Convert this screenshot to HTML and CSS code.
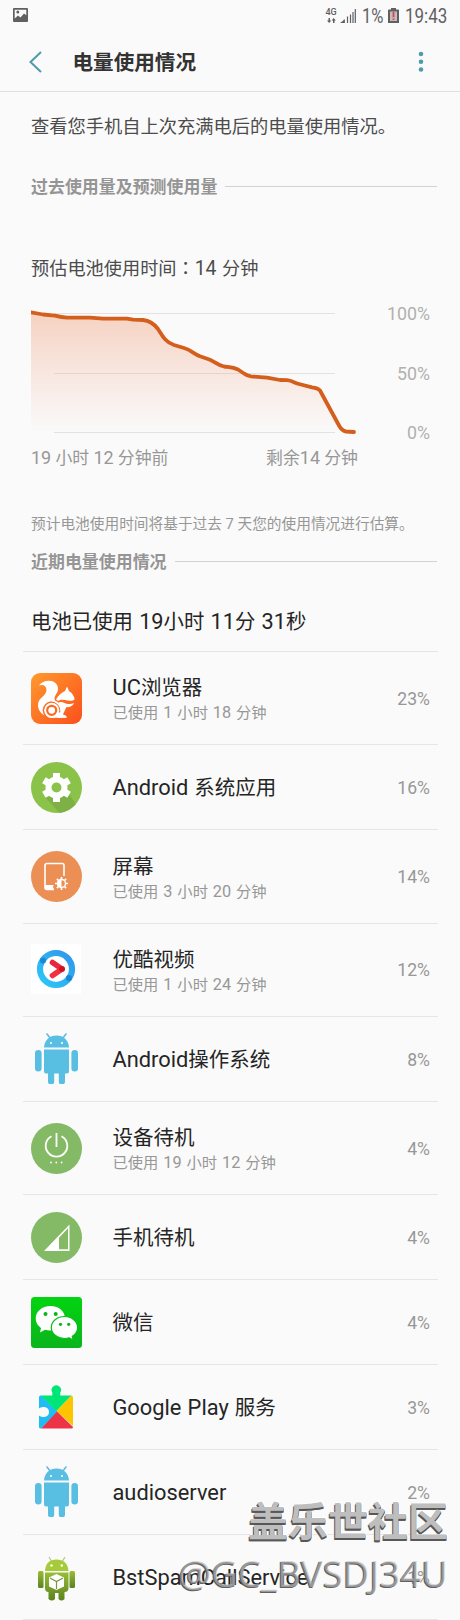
FILE: index.html
```html
<!DOCTYPE html>
<html lang="zh-CN">

<head>
    <meta charset="UTF-8">
    <meta name="viewport" content="width=device-width, initial-scale=1.0">
    <title>电量使用情况</title>
    <link rel="stylesheet" href="styles.css">
</head>

<body>
    <svg class="sprites">
        <symbol id="android" viewBox="0 0 51 51">
            <path d="M13 14.5C13.5 7 18.500 2.500 25.500 2.500S37.500 7 38 14.500z" />
            <path d="M16 1l3.500 4.500M35 1l-3.500 4.500" stroke="#58bfe3" stroke-width="1.600" stroke-linecap="round" />
            <path d="M13 16.500h25v22a2 2 0 0 1-2 2h-2v8a2.800 2.800 0 0 1-6.200 0v-8h-4.600v8a2.800 2.800 0 0 1-6.200 0v-8h-2a2 2 0 0 1-2-2z" />
            <rect x="4" y="17" width="6.600" height="21.500" rx="3.300" />
            <rect x="40.400" y="17" width="6.600" height="21.500" rx="3.300" />
            <circle cx="20" cy="10" r="1.100" fill="#fff" />
            <circle cx="31" cy="10" r="1.100" fill="#fff" />
        </symbol>
    </svg>

    <!-- Status bar -->
    <div class="status">
        <svg class="photo" width="15" height="14" viewBox="0 0 15 14">
            <path fill="#5f6062" fill-rule="evenodd" d="M1 0h13a1 1 0 0 1 1 1v12a1 1 0 0 1-1 1H1a1 1 0 0 1-1-1V1a1 1 0 0 1 1-1zM1.700 1.700v8.800l3.300-3 2.500 2 3.500-4 2.300 1.800V1.700z" />
            <circle cx="4.800" cy="4" r="1.500" fill="#5f6062" />
        </svg>
        <div class="status-right">
            <div class="net">
                <span>4G</span>
                <svg width="9" height="5" viewBox="0 0 9 5">
                    <path fill="#5f6062" d="M1.500 0h1.500v2.500h1.300L2.200 5 0 2.500h1.500zM6 5h1.500V2.500h1.300L6.700 0 4.600 2.500H6z" />
                </svg>
            </div>
            <svg class="signal" width="16" height="14" viewBox="0 0 16 14">
                <path stroke="#5f6062" stroke-width="1.200" d="M4.300 14v-3.500M7.500 14V7.500M10.500 14V5.500M13 14V3M15.300 14V0" />
                <path fill="#5f6062" d="M0 14l4-3v3z" />
            </svg>
            <span class="pct">1%</span>
            <svg class="battery" width="11" height="15" viewBox="0 0 11 15">
                <path fill="#5f6062" d="M3 0h5v1.500h2.200a.800.800 0 0 1 .800.800V15H0V2.300a.800.800 0 0 1 .800-.800H3z" />
                <path fill="#c6bcbc" d="M2 3.500h7v9.500H2z" />
                <path fill="#d8434c" d="M4.600 4h1.800v5.200H4.600zM4.600 10.500h1.800V12H4.600z" />
            </svg>
            <span class="clock">19:43</span>
        </div>
    </div>

    <div class="header">
        <svg width="13" height="22" viewBox="0 0 13 22">
            <path d="M12 1L1.500 11 12 21" fill="none" stroke="#4f9bab" stroke-width="2" />
        </svg>
        <h1>电量使用情况</h1>
        <svg width="6" height="22" viewBox="0 0 6 22" fill="#4f9bab">
            <circle cx="3" cy="3" r="2.300" />
            <circle cx="3" cy="10.700" r="2.300" />
            <circle cx="3" cy="18.500" r="2.300" />
        </svg>
    </div>

    <p class="intro">查看您手机自上次充满电后的电量使用情况。</p>
    <div class="section">
        <h2>过去使用量及预测使用量</h2>
    </div>

    <p class="estimate">预估电池使用时间<span class="colon" lang="zh-TW">：</span><b>14</b> 分钟</p>
    <div class="chart">
        <svg width="330" height="142" viewBox="0 0 330 142">
            <defs>
                <linearGradient id="area" x1="0" y1="0" x2="0" y2="1">
                    <stop offset="0" stop-color="#f09a72" stop-opacity=".42" />
                    <stop offset=".5" stop-color="#f0a080" stop-opacity=".22" />
                    <stop offset="1" stop-color="#f0a080" stop-opacity="0" />
                </linearGradient>
            </defs>
            <path stroke="#e2e2e2" d="M23 13.500h281M23 73.500h281M23 132.500h281" />
            <path fill="url(#area)" d="M0 12.300L12 14.500L24 15.700L35.700 17.700L59 17.700L72 18.700L96 18.700L102 19.700L112 20Q121 21 127 29C131 35 134 42 143 45L156 49L169 56L179 59.700L189 65.300L204 68L217 75.700L236 77.700L249 80L258 80.300L267 84L288 89L310.700 129.300L315 132H0z" />
            <path fill="none" stroke="#d45e1b" stroke-width="3.800" stroke-linejoin="round" d="M-3 12.100L0 12.300L12 14.500L24 15.700Q31 17.500 36 17.700L59 17.700L72 18.700L96 18.700L102 19.700L112 20Q121 21 127 29C131 35 134 42 143 45L153 48C160 50 163 54 169 56.300L179 59.700C184 62 187 65.500 193 66.500C199 67.300 202 67 207 69.500L213 73.500Q216 75.800 220 76.300L236 77.700L249 80L256 80.200C261 80.600 264 83 268 84L281 87.300Q287 88 289 90.500L308 125.500Q311 131 315 131.500L323 132" />
            <circle cx="323" cy="132" r="1.900" fill="#d45e1b" />
        </svg>
        <div class="axis">
            <span>100%</span>
            <span>50%</span>
            <span>0%</span>
        </div>
    </div>
    <div class="times">
        <span><b>19</b> 小时 <b>12</b> 分钟前</span>
        <span>剩余<b>14</b> 分钟</span>
    </div>
    <p class="note">预计电池使用时间将基于过去 7 天您的使用情况进行估算。</p>

    <div class="section">
        <h2>近期电量使用情况</h2>
    </div>
    <p class="total">电池已使用 <b>19</b>小时 <b>11</b>分 <b>31</b>秒</p>

    <!-- App list -->
    <ul class="apps">
        <li class="tall">
            <svg class="icon" viewBox="0 0 51 51">
                <defs>
                    <linearGradient id="uc" x1="0" y1="0" x2="1" y2="1">
                        <stop offset="0" stop-color="#ff9a2e" />
                        <stop offset="1" stop-color="#fb4f1c" />
                    </linearGradient>
                </defs>
                <rect width="51" height="51" rx="9" fill="url(#uc)" />
                <path fill="#fff" d="M8 12.500C10 9 14.500 7.500 18.500 7.700 24 8 27.500 12 27 16.500c-.5 4-3.700 6-3.500 9.500.1 1.500 1 2.500 2 3.500L14 42.500C9.500 40.500 7 36.500 7 32c0-7.500 8.500-9 8.500-15C15.500 13 12 10.800 8 12.500z" />
                <path fill="#fff" d="M25 26.500c2.500-4.500 5.500-6.500 9-8.500l2-4.500 2 4.500c3 1.500 5 5 5.700 8.300-1.500 1.500-4 1.800-7 1.200-4-1-7-1.500-9.700.500z" />
                <path fill="#fff" d="M28 29.500c3-1.500 6 1.500 9.500 1.600 2 .1 4-.3 5.500-1-1 2.800-3.800 4.400-7.800 4.200L32 41.500c2 .3 3.500 1.500 4 3.200H20l6-8z" />
                <circle cx="20.700" cy="37.300" r="9" fill="#fb6a21" />
                <path fill="#fff" d="M16 43.500L30 39l4 5.700H20z" />
                <circle cx="20.700" cy="37.300" r="7.600" fill="#fff" />
                <circle cx="20.700" cy="37.300" r="4.500" fill="#fff" stroke="#fb6a21" stroke-width="2.200" />
                <path fill="none" stroke="#fff" stroke-width="1.700" d="M16.500 27.500c8-1.500 14 4 14 12.500" />
            </svg>
            <div class="info">
                <h3><b>UC</b>浏览器</h3>
                <p>已使用 <b>1</b> 小时 <b>18</b> 分钟</p>
            </div>
            <span class="percent">23%</span>
        </li>
        <li>
            <svg class="icon" viewBox="0 0 51 51">
                <circle cx="25.500" cy="25.500" r="25.500" fill="#8bc34a" />
                <path fill="#7db145" d="M14 35l14.500 15.900A25.500 25.500 0 0 0 45 42L38.500 33z" />
                <circle cx="25.500" cy="25.500" r="8" fill="none" stroke="#fff" stroke-width="6" />
                <g stroke="#fff" stroke-width="7">
                    <path d="M25.500 11v5M25.500 35v5M12.900 18.200l4.300 2.500M33.800 30.300l4.300 2.500M12.900 32.800l4.300-2.500M33.800 20.700l4.300-2.500" />
                </g>
            </svg>
            <div class="info">
                <h3><b>Android</b> 系统应用</h3>
            </div>
            <span class="percent">16%</span>
        </li>
        <li class="tall">
            <svg class="icon" viewBox="0 0 51 51">
                <circle cx="25.500" cy="25.500" r="25.500" fill="#ec8f55" />
                <path fill="none" stroke="#fff" stroke-width="1.600" d="M23 38.500h-7a2 2 0 0 1-2-2V14.500a2 2 0 0 1 2-2h15a2 2 0 0 1 2 2V25" />
                <path fill="#fff" d="M14 34h8.500l-.500 2 1 2.500h-7a2 2 0 0 1-2-2z" />
                <circle cx="30.500" cy="32.500" r="4" fill="none" stroke="#fff" stroke-width="1.400" />
                <path fill="#fff" d="M30.500 28.500a4 4 0 0 0 0 8z" />
                <path stroke="#fff" stroke-width="1.700" d="M30.500 26v2M30.500 37v2M24 32.500h2M35 32.500h2M25.900 27.900l1.400 1.400M33.700 35.700l1.400 1.400M25.900 37.100l1.400-1.400M33.700 29.300l1.400-1.400" />
            </svg>
            <div class="info">
                <h3>屏幕</h3>
                <p>已使用 <b>3</b> 小时 <b>20</b> 分钟</p>
            </div>
            <span class="percent">14%</span>
        </li>
        <li class="tall">
            <svg class="icon" viewBox="0 0 51 51">
                <defs>
                    <linearGradient id="yk" x1="0" y1="1" x2="1" y2="0">
                        <stop offset="0" stop-color="#2cc8f6" />
                        <stop offset="1" stop-color="#3096ea" />
                    </linearGradient>
                </defs>
                <rect width="50" height="50" fill="#fff" />
                <circle cx="25" cy="25" r="16" fill="none" stroke="url(#yk)" stroke-width="6.200" />
                <circle cx="12" cy="16.500" r="3" fill="#1b87d2" />
                <circle cx="38" cy="34" r="3" fill="#1b87d2" />
                <g fill="none" stroke-width="5.600" stroke-linecap="round">
                    <path stroke="#e8283c" d="M21.500 18.500l9.500 6.500" />
                    <path stroke="#f0323f" d="M21.500 31.500l9.500-6.500" />
                    <path stroke="#cc1226" d="M30.800 25h.2" />
                </g>
            </svg>
            <div class="info">
                <h3>优酷视频</h3>
                <p>已使用 <b>1</b> 小时 <b>24</b> 分钟</p>
            </div>
            <span class="percent">12%</span>
        </li>
        <li>
            <svg class="icon droid"><use href="#android" /></svg>
            <div class="info">
                <h3><b>Android</b>操作系统</h3>
            </div>
            <span class="percent">8%</span>
        </li>
        <li class="tall">
            <svg class="icon" viewBox="0 0 51 51">
                <circle cx="25.500" cy="25.500" r="25.500" fill="#84ba65" />
                <path fill="none" stroke="#fff" stroke-width="1.800" d="M25.500 10v14M20.500 13.200a10.800 10.800 0 1 0 10 0" />
                <g fill="#fff">
                    <circle cx="20" cy="39.500" r=".9" />
                    <circle cx="25.300" cy="39.500" r=".9" />
                    <circle cx="30.600" cy="39.500" r=".9" />
                </g>
            </svg>
            <div class="info">
                <h3>设备待机</h3>
                <p>已使用 <b>19</b> 小时 <b>12</b> 分钟</p>
            </div>
            <span class="percent">4%</span>
        </li>
        <li>
            <svg class="icon" viewBox="0 0 51 51">
                <circle cx="25.500" cy="25.500" r="25.500" fill="#84ba65" />
                <path fill="#fff" fill-rule="evenodd" d="M13 39L38.500 12.500V39zM28 25.700v11.600h9V16.300z" />
            </svg>
            <div class="info">
                <h3>手机待机</h3>
            </div>
            <span class="percent">4%</span>
        </li>
        <li>
            <svg class="icon" viewBox="0 0 51 51">
                <defs>
                    <linearGradient id="wx" x1="0" y1="0" x2="0" y2="1">
                        <stop offset="0" stop-color="#02d511" />
                        <stop offset="1" stop-color="#0bb41c" />
                    </linearGradient>
                </defs>
                <rect width="51" height="51" rx="3.500" fill="url(#wx)" />
                <path fill="#fff" d="M19.500 9C11 9 4.700 14.500 4.700 21.500c0 4 2 7.200 5.300 9.500l-1 4.500 5-2.800c2 .600 4 .800 6 .700C28 33.500 34 28 34 21.500 34 14.500 28 9 19.500 9z" />
                <path fill="#fff" stroke="#06c016" stroke-width="1.200" d="M33.500 19.500c-7.300 0-13.200 4.800-13.200 11s5.900 11 13.200 11c1.700 0 3.300-.200 4.700-.700l4 2.200-.900-3.700c3.300-2 5.300-5.200 5.300-8.800 0-6.200-5.800-11-13.100-11z" />
                <g fill="#08b818">
                    <circle cx="14.500" cy="17" r="2" />
                    <circle cx="24.700" cy="17" r="2" />
                    <circle cx="29.500" cy="27.300" r="1.600" />
                    <circle cx="37.700" cy="27.300" r="1.600" />
                </g>
            </svg>
            <div class="info">
                <h3>微信</h3>
            </div>
            <span class="percent">4%</span>
        </li>
        <li>
            <svg class="icon" viewBox="0 0 51 51">
                <path fill="#00e676" d="M9.500 13.500h11.800v-3a4.700 4.700 0 1 1 8 0v3H40.500L25 29.500z" />
                <path fill="#ffc400" d="M40.500 13.500q1.500.5 1.500 2V44L25.500 29z" />
                <path fill="#ef3346" d="M25.500 29L42 45q0 1.500-1.500 1.500H10z" />
                <path fill="#20bdf5" d="M10 13.500q-2 0-2 1.500v11.500c3-2.500 10-2.200 10 3.500s-7 6-10 3.500V45q0 1.500 2 1.500L26 29.800z" />
            </svg>
            <div class="info">
                <h3><b>Google Play</b> 服务</h3>
            </div>
            <span class="percent">3%</span>
        </li>
        <li>
            <svg class="icon droid"><use href="#android" /></svg>
            <div class="info">
                <h3><b>audioserver</b></h3>
            </div>
            <span class="percent">2%</span>
        </li>
        <li>
            <svg class="icon" viewBox="0 0 51 51">
                <defs>
                    <linearGradient id="bot" x1="0" y1="0" x2="0" y2="1">
                        <stop offset="0" stop-color="#98bd38" />
                        <stop offset="1" stop-color="#5b8220" />
                    </linearGradient>
                </defs>
                <path stroke="#b2c88a" stroke-width="1.200" d="M18 5l3 5M34 5l-3 5" />
                <path fill="#a5cb3b" d="M14 19C14.500 11 19 7.500 25.500 7.500S37 11 37.500 19z" />
                <circle cx="20.500" cy="13.500" r="1.200" fill="#fff" />
                <circle cx="30.800" cy="13.500" r="1.200" fill="#fff" />
                <g fill="url(#bot)">
                    <rect x="7" y="19" width="5.500" height="17" rx="1.500" />
                    <rect x="38.500" y="19" width="5.500" height="17" rx="1.500" />
                    <path d="M14 20.500h23.500V36q0 4-4 4v7q-3 3-6 0v-6h-3.500v6q-3 3-6.500 0v-7q-3.500 0-3.500-4z" />
                </g>
                <path fill="#fff" d="M25.500 22l7.500 3.500v9L25.500 38 18 34.500v-9z" />
                <path fill="none" stroke="#78963c" stroke-width="1.200" d="M19 26l6.500 3.500L32 26M25.500 29.500V37" />
            </svg>
            <div class="info">
                <h3><b>BstSpamCallService</b></h3>
            </div>
            <span class="percent">1%</span>
        </li>
    </ul>

    <div class="watermark">
        <div class="wm-name">盖乐世社区</div>
        <div class="wm-user">@GC_BVSDJ34U</div>
    </div>
</body>

</html>
```
FILE: styles.css
```css
* {
    box-sizing: border-box;
    margin: 0;
    padding: 0;
}

body {
    position: relative;
    width: 460px;
    height: 1620px;
    overflow: hidden;
    background-color: #fafafa;
    color: #252525;
    font-family: Roboto, "Noto Sans CJK SC", sans-serif;
    white-space: nowrap;
}

svg {
    display: block;
    flex: none;
}

/* latin letters and digits run a bit larger than the chinese text */
b {
    font-size: 1.065em;
    font-weight: inherit;
    line-height: 1;
}

.sprites {
    display: none;
}

.status {
    display: flex;
    justify-content: space-between;
    align-items: center;
    height: 32px;
    padding: 0 14px 0 13px;
    color: #5f6062;
}

.photo {
    margin-top: -2px;
}

.status-right {
    display: flex;
    align-items: center;
}

.net {
    display: flex;
    flex-direction: column;
    align-items: center;
    width: 12px;
    margin: -1px 3px 0 0;
    gap: 1px;
    font-size: 9px;
    line-height: 9px;
    font-weight: 500;
}

.pct {
    margin-left: 6px;
    font-size: 19.5px;
    transform: scaleX(.85);
    transform-origin: left;
    width: 20px;
}

.battery {
    margin: -1px 6px 0;
}

.clock {
    width: 41px;
    font-size: 19.5px;
    transform: scaleX(.87);
    transform-origin: left;
}

.header {
    display: flex;
    align-items: center;
    height: 60px;
    padding: 1px 36px 0 29px;
    border-bottom: 1px solid #e0e0e0;
}

h1 {
    flex: 1;
    margin: -2px 0 0 30.5px;
    color: #333;
    font-size: 20.6px;
    font-weight: 700;
}

.intro {
    height: 69px;
    padding-left: 31px;
    color: #4c4c4c;
    font-size: 18.25px;
    line-height: 70px;
}

.section {
    display: flex;
    align-items: center;
    height: 50px;
    padding: 0 23px 0 31px;
}

.section::after {
    content: "";
    flex: 1;
    height: 1px;
    margin-left: 8px;
    background-color: #d2d2d2;
}

h2 {
    margin-top: -1px;
    color: #959595;
    font-size: 16.95px;
    font-weight: 700;
}

.estimate {
    height: 89px;
    padding: 45px 0 0 31px;
    color: #4c4c4c;
    font-size: 18.2px;
    line-height: 26px;
    word-spacing: 1px;
}

.colon {
    font-family: "Noto Sans CJK TC", sans-serif;
    line-height: 1;
}

.chart {
    display: flex;
    justify-content: space-between;
    height: 142px;
    padding: 0 30px 0 31px;
}

.axis {
    display: flex;
    flex-direction: column;
    gap: 39.5px;
    padding-top: 4px;
    color: #b0b0b0;
    font-size: 17.8px;
    line-height: 20px;
    text-align: right;
}

.times {
    display: flex;
    justify-content: space-between;
    height: 50px;
    padding: 3px 102px 0 31px;
    color: #979797;
    font-size: 16.9px;
    line-height: 26px;
}

.note {
    height: 44px;
    padding: 19px 0 0 31px;
    color: #979797;
    font-size: 14.7px;
    line-height: 26px;
}

.total {
    height: 65px;
    padding: 21px 0 0 31px;
    font-size: 20.4px;
    line-height: 30px;
    word-spacing: 1.1px;
}

.apps {
    margin: 0 22px 0 23px;
    border-top: 1px solid #e4e4e4;
    list-style: none;
}

.apps li {
    display: flex;
    align-items: center;
    height: 85px;
    padding: 0 8px;
    border-bottom: 1px solid #e6e6e6;
}

.apps .tall {
    height: 93.35px;
}

.icon {
    width: 51px;
    height: 51px;
}

.droid {
    margin-top: -1px;
    fill: #58bfe3;
}

.info {
    flex: 1;
    margin: 2px 0 0 30.5px;
}

.tall .info {
    margin-top: 3px;
}

h3 {
    font-size: 20.5px;
    font-weight: 400;
    line-height: 28px;
    word-spacing: .8px;
}

.info p {
    color: #979797;
    font-size: 15.3px;
    line-height: 23px;
    word-spacing: 1.1px;
}

.percent {
    margin-top: 1px;
    color: #979797;
    font-size: 17.6px;
}

.watermark {
    position: absolute;
    right: 12px;
    top: 1498px;
    text-align: right;
    color: #bebebe;
}

.wm-name {
    font-size: 40px;
    font-weight: 700;
    line-height: 50px;
    text-shadow: 0 1px 0 #585858, 0 2px 0 #585858, -1px 2px 0 #585858, 1px -1px 0 #fff;
}

.wm-user {
    font-family: "Open Sans", sans-serif;
    font-size: 36.7px;
    line-height: 50px;
    color: rgba(190, 190, 190, .6);
    text-shadow: -1px 1px 0 #606060;
}
```
